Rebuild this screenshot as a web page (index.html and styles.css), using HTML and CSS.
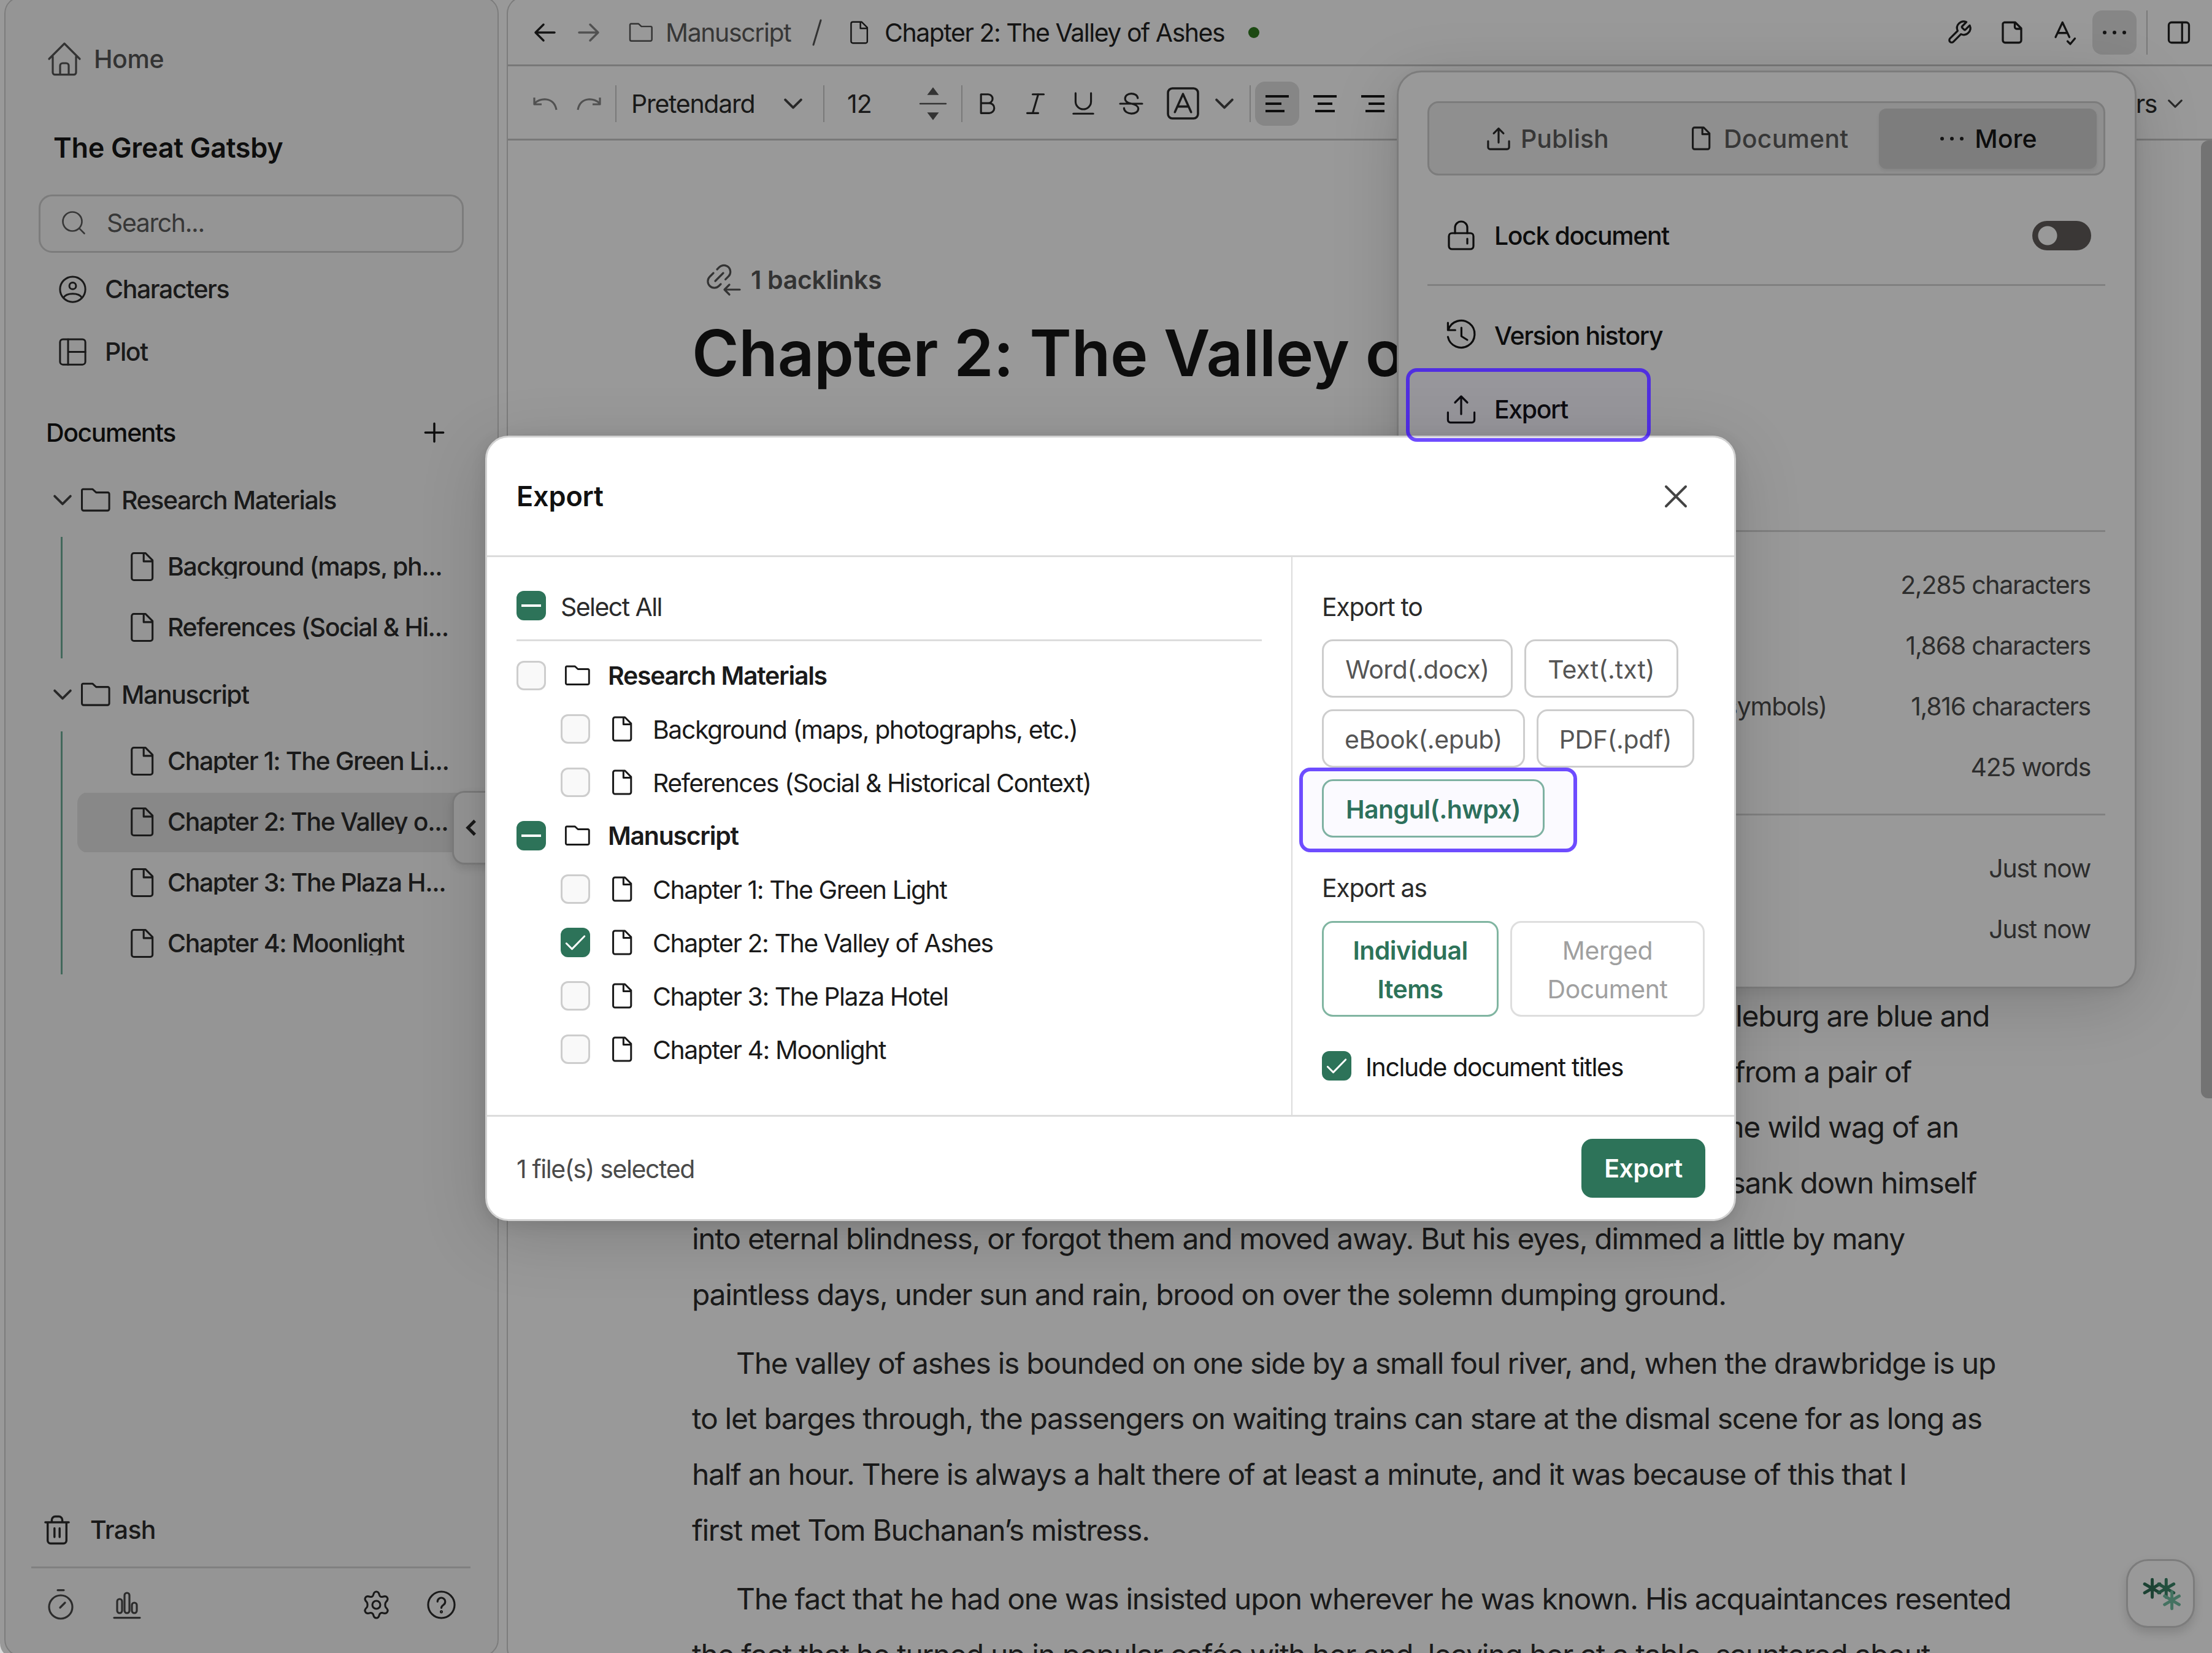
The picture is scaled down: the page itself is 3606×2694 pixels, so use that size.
FILE: index.html
```html
<!DOCTYPE html>
<html lang="en">

<head>
  <meta charset="UTF-8" />
  <meta name="viewport" content="width=device-width, initial-scale=1.0" />
  <title>Chapter 2: The Valley of Ashes</title>
  <link rel="stylesheet" href="styles.css">
</head>

<body>
  <!-- Icon sprite -->
  <svg class="sprite" width="0" height="0">
    <symbol id="i-file" viewBox="0 0 20 25"><path d="M3.2 1.2h9.6l6 6V22a1.8 1.8 0 0 1-1.8 1.8H3.2A1.8 1.8 0 0 1 1.4 22V3a1.8 1.8 0 0 1 1.8-1.8z M11.4 1.2v6.9h7.4" /></symbol>
    <symbol id="i-folder" viewBox="0 0 26 21"><path d="M1.2 2.2a1 1 0 0 1 1-1h8.2l3 2.8h10a1.2 1.2 0 0 1 1.2 1.2v12.8a1.5 1.5 0 0 1-1.5 1.5H2.7a1.5 1.5 0 0 1-1.5-1.5z" /></symbol>
    <symbol id="i-down" viewBox="0 0 28 28"><path d="M2 8l12 12L26 8" /></symbol>
    <symbol id="i-export" viewBox="0 0 24 24"><path d="M12 16V1.5M7 6.5l5-5 5 5M1.2 14.5v6.3a2 2 0 0 0 2 2h17.6a2 2 0 0 0 2-2v-6.3" /></symbol>
    <symbol id="i-check" viewBox="0 0 24 24"><path d="M4 12.8l5 5L20 6.5" /></symbol>
  </svg>

  <div class="app">
    <!-- Sidebar -->
    <aside class="sidebar">
      <a class="home">
        <svg viewBox="0 0 28 28"><path d="M1.5 14L14 1.5 26.5 14M4.5 12v13a1.8 1.8 0 0 0 1.8 1.8h15.4a1.8 1.8 0 0 0 1.8-1.8V12M10.5 26.5v-7a2 2 0 0 1 2-2h3a2 2 0 0 1 2 2v7" /></svg>
        <span>Home</span>
      </a>
      <h2 class="project">The Great Gatsby</h2>
      <div class="search">
        <svg viewBox="0 0 24 24"><circle cx="10.8" cy="10.8" r="9.3" /><path d="M17.5 17.5l5 5" /></svg>
        <span>Search...</span>
      </div>
      <a class="nav-item">
        <svg viewBox="0 0 24 24"><circle cx="12" cy="12" r="11" /><circle cx="12" cy="9" r="2.9" /><path d="M4 19.2c1.5-2.6 4.5-3.4 8-3.4s6.5.8 8 3.4" /></svg>
        <span>Characters</span>
      </a>
      <a class="nav-item">
        <svg viewBox="0 0 24 24"><rect x="1" y="1" width="22" height="22" rx="2.5" /><path d="M8 1v22M8 12h15" /></svg>
        <span>Plot</span>
      </a>
      <div class="section-title">
        <span>Documents</span>
        <svg viewBox="0 0 24 24"><path d="M12 1v22M1 12h22" /></svg>
      </div>

      <div class="folder">
        <svg class="caret"><use href="#i-down" /></svg>
        <svg class="folder-icon"><use href="#i-folder" /></svg>
        <span class="name">Research Materials</span>
      </div>
      <div class="children">
        <div class="doc"><svg><use href="#i-file" /></svg><span class="name">Background (maps, ph...</span></div>
        <div class="doc"><svg><use href="#i-file" /></svg><span class="name">References (Social &amp; Hi...</span></div>
      </div>
      <div class="folder">
        <svg class="caret"><use href="#i-down" /></svg>
        <svg class="folder-icon"><use href="#i-folder" /></svg>
        <span class="name">Manuscript</span>
      </div>
      <div class="children">
        <div class="doc"><svg><use href="#i-file" /></svg><span class="name">Chapter 1: The Green Li...</span></div>
        <div class="doc active"><svg><use href="#i-file" /></svg><span class="name">Chapter 2: The Valley o...</span></div>
        <div class="doc"><svg><use href="#i-file" /></svg><span class="name">Chapter 3: The Plaza H...</span></div>
        <div class="doc"><svg><use href="#i-file" /></svg><span class="name">Chapter 4: Moonlight</span></div>
      </div>

      <div class="sidebar-footer">
        <div class="trash">
          <svg viewBox="0 0 22 25"><path d="M1 6h20M6.5 6V4a3 3 0 0 1 3-3h3a3 3 0 0 1 3 3v2M3 6v15.5A2.5 2.5 0 0 0 5.5 24h11a2.5 2.5 0 0 0 2.5-2.5V6M8.8 11v7.5M13.2 11v7.5" /></svg>
          <span>Trash</span>
        </div>
        <div class="tools">
          <svg class="soft" viewBox="0 0 24 26"><circle cx="12" cy="15" r="9.5" /><path d="M9.5 1.3h5M11.5 15.5l4-4" /></svg>
          <svg class="soft stats-icon" viewBox="0 0 24 26"><rect x="4" y="8.5" width="4" height="11.5" rx="2" /><rect x="10" y="3.5" width="4" height="16.5" rx="2" /><rect x="16" y="11.5" width="4" height="8.5" rx="2" /><path d="M1.5 23.8h21" /></svg>
          <svg class="gear" viewBox="0 0 24 24"><path d="M12 1c1.5 0 2.2 1.2 2.5 2.7.3 1.3 1.6 2 2.9 1.5 1.5-.5 2.9-.5 3.7.8.8 1.3.1 2.5-1 3.5-1 1-1 3.9 0 4.9 1.1 1 1.8 2.3 1 3.6-.8 1.3-2.2 1.3-3.7.8-1.3-.5-2.6.3-2.9 1.6C14.2 21.8 13.5 23 12 23s-2.2-1.2-2.5-2.6c-.3-1.3-1.6-2.1-2.9-1.6-1.5.5-2.9.5-3.7-.8-.8-1.3-.1-2.6 1-3.6 1-1 1-3.9 0-4.9-1.1-1-1.8-2.2-1-3.5.8-1.3 2.2-1.3 3.7-.8 1.3.5 2.6-.2 2.9-1.5C9.8 2.2 10.5 1 12 1z" /><circle cx="12" cy="12" r="3.3" /></svg>
          <svg viewBox="0 0 24 24"><circle cx="12" cy="12" r="11" /><path d="M8.8 9.3a3.2 3.2 0 1 1 5 2.7c-1.1.8-1.8 1.3-1.8 2.5" /><circle cx="12" cy="17.8" r=".5" /></svg>
        </div>
      </div>

      <div class="collapse"><svg viewBox="0 0 18 30"><path d="M15 3L3 15l12 12" /></svg></div>
    </aside>

    <!-- Editor -->
    <main class="main">
      <header class="topbar">
        <svg class="arrow" viewBox="0 0 34 30"><path d="M33 15H2M15 2L2 15l13 13" /></svg>
        <svg class="arrow next" viewBox="0 0 34 30"><path d="M1 15h31M19 2l13 13-13 13" /></svg>
        <svg class="crumb-icon"><use href="#i-folder" /></svg>
        <span class="crumb">Manuscript</span>
        <svg class="slash" viewBox="0 0 16 42"><path d="M14 1L2 41" /></svg>
        <svg class="crumb-file"><use href="#i-file" /></svg>
        <span class="crumb-current">Chapter 2: The Valley of Ashes</span>
        <i class="dot"></i>
        <div class="actions">
          <svg viewBox="2 2 20 20"><path d="M14.7 6.3a1 1 0 0 0 0 1.4l1.6 1.6a1 1 0 0 0 1.4 0l3.77-3.77a6 6 0 0 1-7.94 7.94l-6.91 6.91a2.12 2.12 0 0 1-3-3l6.91-6.91a6 6 0 0 1 7.94-7.94z" /></svg>
          <svg viewBox="0 0 24 24"><path d="M3.5 1h12l6.500 6.500v13a2.500 2.500 0 0 1-2.500 2.500h-15A2.500 2.500 0 0 1 2 20.500V3a2 2 0 0 1 1.500-2zM15 1v5a2 2 0 0 0 2 2h5" /></svg>
          <svg viewBox="0 0 24 24"><path d="M2 17L9.5 1 17 17M4.5 12.5h10M15 21.5l3 3 5-6" /></svg>
          <span class="more"><i></i><i></i><i></i></span>
          <span class="sep"></span>
          <svg viewBox="0 0 24 24"><rect x="1" y="1" width="22" height="22" rx="3" /><path d="M15.5 1v22" /></svg>
        </div>
      </header>

      <div class="toolbar">
        <svg class="undo" viewBox="0 0 40 24"><path d="M2 2v11h12M2 12C10 2 34 0 38 22" /></svg>
        <svg class="undo redo" viewBox="0 0 40 24"><path d="M38 2v11H26M38 12C30 2 6 0 2 22" /></svg>
        <span class="sep"></span>
        <span class="font-name">Pretendard</span>
        <svg class="chev"><use href="#i-down" /></svg>
        <span class="sep sep-size"></span>
        <span class="font-size">12</span>
        <svg class="stepper" viewBox="0 0 44 56"><path class="solid" d="M22 0l10 13H12zM22 56l10-13H12z" /><path d="M0 28h44" /></svg>
        <span class="sep sep-style"></span>
        <svg class="fmt" viewBox="0 0 40 40"><path d="M8 3h13a8 8 0 0 1 0 16H8zM8 19h15a9 9 0 0 1 0 18H8z" /></svg>
        <svg class="fmt" viewBox="0 0 40 40"><path d="M15 3h20M5 37h20M25 3L15 37" /></svg>
        <svg class="fmt" viewBox="0 0 40 40"><path d="M6 1v15a14 14 0 0 0 28 0V1M2 38h36" /></svg>
        <svg class="fmt" viewBox="0 0 40 40"><path d="M32 10c-1-11-23-11-23 1 0 7 8 8 12 9s12 3 12 9c0 12-25 12-26-1M0 20h40" /></svg>
        <svg class="fmt boxed" viewBox="0 0 52 52"><rect x="2" y="2" width="48" height="48" rx="7" /><path d="M13 40L26 11l13 29M17.5 31h17" /></svg>
        <svg class="chev chev-color"><use href="#i-down" /></svg>
        <span class="sep sep-align"></span>
        <span class="align on"><svg viewBox="0 0 38 30"><path d="M0 3h38M0 15h26M0 27h31" /></svg></span>
        <span class="align"><svg viewBox="0 0 38 30"><path d="M0 3h38M7 15h24M3 27h32" /></svg></span>
        <span class="align"><svg viewBox="0 0 38 30"><path d="M0 3h38M12 15h26M7 27h31" /></svg></span>
        <span class="headers">Headers</span>
        <svg class="chev chev-end"><use href="#i-down" /></svg>
      </div>

      <article class="page">
        <div class="backlinks">
          <svg viewBox="0 0 28 26"><path d="M9.5 4.5l1.8-1.8a5.3 5.3 0 0 1 7.5 7.5l-2.5 2.5M6.5 7.5L3.5 10.5a5.3 5.3 0 0 0 7.5 7.5l1.5-1.5M8 14l6.5-6.5M28 21H15.5M19.5 17l-4 4 4 4" /></svg>
          <span>1 backlinks</span>
        </div>
        <h1>Chapter 2: The Valley of Ashes</h1>
        <div class="prose">
          <p>But above the gray land and the spasms of bleak dust which drift endlessly over it, you perceive,<br>
            after a moment, the eyes of Doctor T. J. Eckleburg. The eyes of Doctor T. J. Eckleburg are blue and<br>
            gigantic—their retinas are one yard high. They look out of no face, but, instead, from a pair of<br>
            enormous yellow spectacles which pass over a nonexistent nose. Evidently some wild wag of an<br>
            oculist set them there to fatten his practice in the borough of Queens, and then sank down himself<br>
            into eternal blindness, or forgot them and moved away. But his eyes, dimmed a little by many<br>
            paintless days, under sun and rain, brood on over the solemn dumping ground.</p>
          <p>The valley of ashes is bounded on one side by a small foul river, and, when the drawbridge is up<br>
            to let barges through, the passengers on waiting trains can stare at the dismal scene for as long as<br>
            half an hour. There is always a halt there of at least a minute, and it was because of this that I<br>
            first met Tom Buchanan’s mistress.</p>
          <p>The fact that he had one was insisted upon wherever he was known. His acquaintances resented<br>
            the fact that he turned up in popular cafés with her and, leaving her at a table, sauntered about,</p>
        </div>
      </article>
    </main>

    <div class="scrollbar"></div>

    <!-- More menu -->
    <div class="popover">
      <div class="tabs">
        <div class="tab tab-publish"><svg><use href="#i-export" /></svg><span>Publish</span></div>
        <div class="tab tab-document"><svg><use href="#i-file" /></svg><span>Document</span></div>
        <div class="tab tab-more"><b class="dots"><i></i><i></i><i></i></b><span>More</span></div>
      </div>
      <div class="menu-row lock">
        <svg viewBox="0 0 24 24"><rect x="2" y="10" width="20" height="13" rx="2.5" /><path d="M7 10V5.5a5 5 0 0 1 10 0V10M17 14.5v4" /></svg>
        <span>Lock document</span>
        <div class="toggle"></div>
      </div>
      <hr>
      <div class="menu">
        <div class="menu-row">
          <svg viewBox="0 0 24 24"><path d="M1.2 1.5v6h6M1.5 7.3A11 11 0 1 1 1.2 13M12.2 5.5v7l4.8 3" /></svg>
          <span>Version history</span>
        </div>
        <div class="menu-row">
          <svg><use href="#i-export" /></svg>
          <span>Export</span>
        </div>
      </div>
      <hr>
      <div class="stats">
        <div class="stat"><span>With spaces</span><span>2,285 characters</span></div>
        <div class="stat"><span>Without spaces</span><span>1,868 characters</span></div>
        <div class="stat"><span class="label-long">Without spaces (excluding symbols)</span><span>1,816 characters</span></div>
        <div class="stat"><span>Words</span><span>425 words</span></div>
      </div>
      <hr>
      <div class="stats">
        <div class="stat"><span>Created</span><span>Just now</span></div>
        <div class="stat"><span>Updated</span><span>Just now</span></div>
      </div>
    </div>

    <div class="assistant">
      <svg viewBox="0 0 60 60">
        <path class="a1" d="M17 8v28M5 15l24 14M29 15L5 29" />
        <path class="a2" d="M39 8v28M27 15l24 14M51 15L27 29" />
        <path class="a3" d="M48 27v27M36.5 34l23 13.5M59.5 34l-23 13.5" />
      </svg>
    </div>

    <div class="overlay"></div>
  </div>

  <!-- Export dialog -->
  <div class="modal">
    <div class="modal-header">
      <h3>Export</h3>
      <svg viewBox="0 0 36 36"><path d="M2 2l32 32M34 2L2 34" /></svg>
    </div>
    <div class="modal-body">
      <div class="files">
        <div class="select-all"><i class="box minus"></i><span>Select All</span></div>
        <div class="file-row group"><i class="box"></i><svg><use href="#i-folder" /></svg><span>Research Materials</span></div>
        <div class="file-row"><i class="box"></i><svg><use href="#i-file" /></svg><span>Background (maps, photographs, etc.)</span></div>
        <div class="file-row"><i class="box"></i><svg><use href="#i-file" /></svg><span>References (Social &amp; Historical Context)</span></div>
        <div class="file-row group"><i class="box minus"></i><svg><use href="#i-folder" /></svg><span>Manuscript</span></div>
        <div class="file-row"><i class="box"></i><svg><use href="#i-file" /></svg><span>Chapter 1: The Green Light</span></div>
        <div class="file-row"><i class="box checked"><svg><use href="#i-check" /></svg></i><svg><use href="#i-file" /></svg><span>Chapter 2: The Valley of Ashes</span></div>
        <div class="file-row"><i class="box"></i><svg><use href="#i-file" /></svg><span>Chapter 3: The Plaza Hotel</span></div>
        <div class="file-row"><i class="box"></i><svg><use href="#i-file" /></svg><span>Chapter 4: Moonlight</span></div>
      </div>
      <div class="options">
        <p class="label">Export to</p>
        <div class="formats">
          <button class="w-word">Word(.docx)</button>
          <button class="w-text">Text(.txt)</button>
          <button class="w-epub">eBook(.epub)</button>
          <button class="w-pdf">PDF(.pdf)</button>
          <button class="w-hwpx selected">Hangul(.hwpx)</button>
        </div>
        <p class="label label-as">Export as</p>
        <div class="modes">
          <button class="w-items selected">Individual<br>Items</button>
          <button class="w-merged disabled">Merged<br>Document</button>
        </div>
        <div class="titles"><i class="box checked"><svg><use href="#i-check" /></svg></i><span>Include document titles</span></div>
      </div>
    </div>
    <div class="modal-footer">
      <span>1 file(s) selected</span>
      <button class="submit">Export</button>
    </div>
  </div>

  <!-- Highlights -->
  <div class="mark mark-menu"></div>
  <div class="mark mark-format"></div>
</body>

</html>
```

FILE: styles.css
```css
* {
  margin: 0;
  padding: 0;
  box-sizing: border-box;
}

body {
  position: relative;
  width: 3606px;
  height: 2694px;
  overflow: hidden;
  background: #dcdcdc;
  font-family: 'Inter', sans-serif;
  font-size: 41px;
  letter-spacing: -0.034em;
  color: #1a1a1a;
}

svg {
  display: block;
  flex: none;
  fill: none;
  stroke: currentColor;
  stroke-width: 1.6;
  stroke-linecap: round;
  stroke-linejoin: round;
  overflow: visible;
}

span {
  white-space: nowrap;
}

.sprite {
  position: absolute;
}

.app {
  position: relative;
  display: flex;
  gap: 13px;
  width: 3606px;
  height: 2702px;
  padding-left: 7px;
  background: #fff;
  border-radius: 0 0 0 24px;
  overflow: hidden;
}

.overlay {
  position: absolute;
  inset: 0;
  background: rgba(0, 0, 0, 0.4);
}

/* Sidebar */
.sidebar {
  position: relative;
  display: flex;
  flex-direction: column;
  width: 806px;
  height: 2706px;
  margin-top: -6px;
  padding-top: 4px;
  background: #f9f9f9;
  border: 2px solid #cfcfcf;
  border-radius: 28px;
  font-weight: 500;
  color: #2c2c2c;
}

.home {
  display: flex;
  align-items: center;
  gap: 20px;
  height: 60px;
  margin: 66px 0 0 68px;
  letter-spacing: -0.01em;
  color: #555;
}

.home svg {
  width: 56px;
  height: 56px;
}

.project {
  margin: 85px 0 0 78px;
  font-size: 45px;
  line-height: 60px;
  font-weight: 600;
  letter-spacing: -0.007em;
  color: #181818;
}

.search {
  display: flex;
  align-items: center;
  gap: 34px;
  width: 693px;
  height: 95px;
  margin: 46px 0 0 54px;
  padding: 0 0 3px 34px;
  border: 3px solid #cfcfcf;
  border-radius: 22px;
  font-weight: 400;
  color: #5c5c5c;
}

.search svg {
  width: 40px;
  height: 40px;
}

.nav-item {
  display: flex;
  align-items: center;
  gap: 30px;
  height: 102px;
  padding-left: 87px;
}

.search + .nav-item {
  margin-top: 8px;
}

.nav-item svg {
  width: 45px;
  height: 45px;
}

.section-title {
  display: flex;
  align-items: center;
  justify-content: space-between;
  height: 60px;
  margin: 51px 87px 22px 66px;
  color: #141414;
}

.section-title svg {
  width: 32px;
  height: 32px;
  stroke-width: 2.6;
}

.folder {
  display: flex;
  align-items: center;
  height: 99px;
  margin-top: 10px;
  padding: 0 0 4px 78px;
}

.caret {
  width: 30px;
  height: 30px;
  margin-right: 14px;
  stroke-width: 3.5;
  color: #444;
}

.folder-icon {
  width: 50px;
  height: 40px;
  margin-right: 17px;
}

.children {
  margin: 9px 28px 0 90px;
  border-left: 3px solid #6fae98;
}

.children + .folder {
  margin-top: 11px;
}

.doc {
  display: flex;
  align-items: center;
  gap: 22px;
  height: 99px;
  margin-left: 24px;
  padding: 0 0 3px 86px;
}

.doc.active {
  background: linear-gradient(#e3e3e3, #e3e3e3) 0 1px / 100% 97px no-repeat;
  border-radius: 18px;
}

.doc svg {
  width: 39px;
  height: 49px;
}

.name {
  line-height: 40px;
  overflow: hidden;
}

.sidebar-footer {
  margin: auto 44px 52px 42px;
}

.trash {
  display: flex;
  align-items: center;
  gap: 33px;
  height: 60px;
  margin-bottom: 30px;
  padding-left: 21px;
  letter-spacing: -0.016em;
}

.trash svg {
  width: 42px;
  height: 49px;
  stroke-width: 1.8;
}

.tools {
  display: flex;
  align-items: center;
  height: 93px;
  padding: 28px 24px 0 24px;
  border-top: 3px solid #d6d6d6;
}

.tools svg {
  width: 47px;
  height: 47px;
}

.tools .soft {
  width: 48px;
  height: 52px;
  color: #4a4a4a;
}

.tools .stats-icon {
  margin: 0 auto 0 60px;
}

.tools .gear {
  margin-right: 59px;
}

.collapse {
  position: absolute;
  right: 0;
  top: 1293px;
  display: flex;
  align-items: center;
  width: 74px;
  height: 120px;
  padding-left: 20px;
  background: #f9f9f9;
  border: 3px solid #cfcfcf;
  border-right: 0;
  border-radius: 20px 0 0 20px;
  box-shadow: 0 6px 16px rgba(0, 0, 0, 0.12);
}

.collapse svg {
  width: 17px;
  height: 30px;
  stroke-width: 5.5;
  stroke-linecap: butt;
  stroke-linejoin: miter;
}

/* Editor header */
.main {
  flex: 1;
  height: 2720px;
  margin-top: -6px;
  padding-top: 4px;
  border: 2px solid #cfcfcf;
  border-right: 0;
  border-radius: 28px 0 0 28px;
  background: #fff;
  overflow: hidden;
}

.topbar {
  display: flex;
  align-items: center;
  height: 108px;
  padding: 2px 36px 1px 43px;
  border-bottom: 3px solid #c9c9c9;
  color: #222;
}

.arrow {
  width: 34px;
  height: 30px;
  stroke-width: 3.5;
}

.arrow.next {
  margin-left: 38px;
  color: #888;
}

.crumb-icon {
  width: 40px;
  height: 32px;
  margin-left: 48px;
  color: #555;
}

.crumb {
  width: 239px;
  margin-left: 20px;
  color: #5c5c5c;
}

.slash {
  width: 16px;
  height: 42px;
  stroke-width: 3;
  color: #555;
}

.crumb-file {
  width: 31px;
  height: 38px;
  margin-left: 45px;
}

.crumb-current {
  margin-left: 26px;
  width: 593px;
  letter-spacing: -0.036em;
}

.dot {
  width: 18px;
  height: 18px;
  border-radius: 50%;
  background: #2f7a1f;
}

.actions {
  display: flex;
  align-items: center;
  margin-left: auto;
}

.actions svg {
  width: 36px;
  height: 36px;
  margin-left: 50px;
  stroke-width: 2.2;
}

.actions svg:first-child {
  stroke-width: 1.8;
}

.more {
  display: flex;
  align-items: center;
  justify-content: center;
  gap: 10px;
  width: 72px;
  height: 72px;
  margin-left: 27px;
  border-radius: 16px;
  background: #e0e0e0;
}

.more i,
.dots i {
  width: 6px;
  height: 6px;
  border-radius: 50%;
  background: #222;
}

.sep {
  width: 2px;
  height: 60px;
  background: #cacaca;
}

.actions .sep {
  height: 72px;
  margin-left: 16px;
}

.actions .sep + svg {
  margin-left: 33px;
}

/* Toolbar */
.toolbar {
  display: flex;
  align-items: center;
  height: 121px;
  padding: 3px 0 0 41px;
  border-bottom: 3px solid #c9c9c9;
  color: #2a2a2a;
}

.undo {
  width: 40px;
  height: 24px;
  stroke-width: 3.2;
  stroke-linecap: butt;
  color: #888;
}

.redo {
  margin: 0 23px 0 31px;
}

.font-name {
  width: 249px;
  margin-left: 24px;
  letter-spacing: -0.031em;
}

.chev {
  width: 30px;
  height: 30px;
  stroke-width: 3.6;
  color: #444;
}

.sep-size {
  margin: 0 37px 0 34px;
}

.font-size {
  width: 119px;
  letter-spacing: -0.02em;
}

.stepper {
  width: 42px;
  height: 54px;
  stroke-width: 2.5;
  color: #555;
}

.stepper .solid {
  fill: #555;
  stroke: none;
}

.sep-style {
  margin: 0 21px 0 25px;
}

.fmt {
  width: 40px;
  height: 36px;
  margin-right: 38px;
  stroke-width: 3.5;
}

.boxed {
  width: 53px;
  height: 53px;
  margin: 0 26px 0 0;
}

.sep-align {
  margin: 0 7px 0 26px;
}

.align {
  display: flex;
  align-items: center;
  justify-content: center;
  width: 72px;
  height: 72px;
  margin-right: 6px;
  border-radius: 16px;
}

.align.on {
  background: #e0e0e0;
}

.align svg {
  width: 38px;
  height: 30px;
  stroke-width: 3.8;
  stroke-linecap: butt;
  color: #181818;
}

.headers {
  margin-left: auto;
}

.chev-end {
  width: 24px;
  height: 24px;
  margin: 0 48px 0 18px;
}

/* Page */
.page {
  padding: 197px 0 0 300px;
}

.backlinks {
  display: flex;
  align-items: center;
  gap: 18px;
  height: 60px;
  padding-left: 22px;
  font-weight: 600;
  letter-spacing: -0.008em;
  color: #555;
}

.backlinks svg {
  width: 56px;
  height: 52px;
}

h1 {
  margin-top: 24px;
  font-size: 104px;
  line-height: 130px;
  font-weight: 600;
  letter-spacing: -0.003em;
  white-space: nowrap;
  color: #161616;
}

.prose {
  margin-top: 880px;
  font-size: 48px;
  line-height: 90.8px;
  letter-spacing: -0.0273em;
  white-space: nowrap;
  color: #2c2c2c;
}

.prose p {
  margin-bottom: 21px;
  text-indent: 72px;
}

.scrollbar {
  position: absolute;
  right: 0;
  top: 229px;
  width: 18px;
  height: 1561px;
  border-radius: 12px 0 0 12px;
  background: #c0c0c0;
}

/* More menu */
.popover {
  position: absolute;
  left: 2277px;
  top: 115px;
  width: 1206px;
  height: 1496px;
  padding: 47px 48px 0 47px;
  background: #fff;
  border: 3px solid #cfcfcf;
  border-radius: 40px;
  box-shadow: 0 24px 110px rgba(0, 0, 0, 0.16), 0 6px 20px rgba(0, 0, 0, 0.06);
}

.tabs {
  display: flex;
  align-items: center;
  height: 121px;
  padding: 9px;
  background: #efefef;
  border: 3px solid #cfcfcf;
  border-radius: 18px;
  font-weight: 500;
  letter-spacing: 0;
  color: #5c5c5c;
}

.tab {
  display: flex;
  align-items: center;
  height: 98px;
}

.tab-publish {
  width: 418px;
  gap: 17px;
  padding-left: 85px;
}

.tab-document {
  width: 306px;
  gap: 21px;
  letter-spacing: 0.005em;
}

.tab-more {
  flex: 1;
  justify-content: center;
  gap: 18px;
  margin-right: 2px;
  padding-left: 3px;
  border-radius: 12px;
  background: #d0d0d0;
  box-shadow: 0 3px 6px rgba(0, 0, 0, 0.08);
  color: #161616;
}

.tab-publish svg {
  width: 38px;
  height: 38px;
  stroke-width: 2;
  color: #2a2a2a;
}

.tab-document svg {
  width: 32px;
  height: 39px;
  stroke-width: 2;
  color: #2a2a2a;
}

.dots {
  display: flex;
  gap: 10px;
}

.menu-row {
  display: flex;
  align-items: center;
  gap: 30px;
  height: 120px;
  padding-left: 31px;
  font-weight: 500;
  color: #161616;
}

.menu-row svg {
  width: 48px;
  height: 48px;
}

.lock {
  height: 100px;
  margin: 48px 23px 29px 0;
}

.toggle {
  width: 96px;
  height: 48px;
  margin-left: auto;
  border-radius: 24px;
  background: radial-gradient(circle at 25px 24px, #fff 15px, #615d5a 16px);
}

hr {
  height: 3px;
  border: 0;
  background: #d6d6d6;
}

.menu {
  height: 398px;
  padding-top: 21px;
}

.stats {
  padding: 36px 24px 27px;
}

.stat {
  display: flex;
  align-items: center;
  justify-content: space-between;
  height: 99px;
  letter-spacing: -0.031em;
  color: #4c4c4c;
}

.label-long {
  display: flex;
  justify-content: flex-end;
  width: 627px;
}

.assistant {
  position: absolute;
  left: 3466px;
  top: 2541px;
  display: flex;
  align-items: center;
  justify-content: center;
  width: 112px;
  height: 112px;
  background: #fff;
  border: 3px solid #cfcfcf;
  border-radius: 36px;
  box-shadow: 0 8px 16px rgba(0, 0, 0, 0.14);
}

.assistant svg {
  width: 62px;
  height: 62px;
  stroke-width: 4.8;
}

.a1 {
  stroke: #2f6f55;
}

.a2 {
  stroke: #3a8468;
}

.a3 {
  stroke: #72bfa2;
}

/* Export dialog */
.modal {
  position: absolute;
  left: 791px;
  top: 710px;
  display: flex;
  flex-direction: column;
  width: 2039px;
  height: 1280px;
  background: #fff;
  border: 3px solid #d2d2d2;
  border-radius: 38px;
  box-shadow: 0 24px 110px rgba(0, 0, 0, 0.16), 0 6px 24px rgba(0, 0, 0, 0.1);
}

.modal-header {
  display: flex;
  align-items: center;
  justify-content: space-between;
  height: 195px;
  padding: 0 77px 1px 48px;
  border-bottom: 3px solid #dcdcdc;
}

h3 {
  font-size: 45px;
  font-weight: 600;
  letter-spacing: -0.004em;
  color: #111;
}

.modal-header svg {
  width: 36px;
  height: 36px;
  stroke-width: 4;
  color: #444;
}

.modal-body {
  flex: 1;
  display: flex;
}

.files {
  width: 1313px;
  padding: 34px 48px 0 48px;
  border-right: 2px solid #dcdcdc;
}

.select-all {
  display: flex;
  align-items: center;
  gap: 24px;
  height: 103px;
  margin-bottom: 12px;
  padding-bottom: 10px;
  border-bottom: 3px solid #dcdcdc;
  letter-spacing: -0.038em;
  color: #2a2a2a;
}

.select-all span,
.file-row span {
  padding-top: 3px;
}

.box {
  display: flex;
  align-items: center;
  justify-content: center;
  flex: none;
  width: 48px;
  height: 48px;
  border: 3px solid #cdcdcd;
  border-radius: 12px;
  background: #f9f9f9;
}

.box.minus {
  border-color: #2d7359;
  background: linear-gradient(#fff, #fff) center / 32px 4px no-repeat #2d7359;
}

.box.checked {
  border-color: #2d7359;
  background: #2d7359;
  color: #fff;
}

.box svg {
  width: 44px;
  height: 44px;
}

.file-row {
  display: flex;
  align-items: center;
  height: 87px;
  padding-left: 72px;
  letter-spacing: -0.0355em;
}

.file-row > svg {
  width: 34px;
  height: 42px;
  margin: 0 33px 0 35px;
  stroke-width: 1.8;
}

.file-row.group {
  padding-left: 0;
  font-weight: 600;
  letter-spacing: -0.031em;
}

.file-row.group span {
  padding-top: 1px;
}

.file-row.group > svg {
  width: 43px;
  height: 34px;
  margin: 0 28px 0 30px;
}

.options {
  flex: 1;
  padding: 51px 0 0 48px;
}

.label {
  height: 60px;
  line-height: 60px;
  margin-bottom: 23px;
  letter-spacing: -0.032em;
  color: #2a2a2a;
}

.label-as {
  margin: 52px 0 24px;
}

.formats,
.modes {
  display: flex;
  flex-wrap: wrap;
  gap: 19px;
}

button {
  height: 95px;
  padding-top: 3px;
  background: none;
  border: 3px solid #cdcdcd;
  border-radius: 18px;
  font: inherit;
  letter-spacing: -0.01em;
  color: #555;
}

.selected {
  border-color: #80b5a1;
  font-weight: 600;
  letter-spacing: -0.013em;
  color: #2d7359;
}

.disabled {
  border-color: #dedede;
  color: #a0a0a0;
}

.w-word { width: 311px; }
.w-text { width: 251px; letter-spacing: 0; }
.w-epub { width: 331px; }
.w-pdf { width: 257px; }
.w-hwpx { width: 363px; }
.w-items { width: 288px; }
.w-merged { width: 317px; }

.modes button {
  height: 156px;
  line-height: 63px;
}

.titles {
  display: flex;
  align-items: center;
  gap: 23px;
  height: 60px;
  margin-top: 50px;
  letter-spacing: -0.034em;
  color: #161616;
}

.titles span {
  padding-top: 3px;
}

.modal-footer {
  display: flex;
  align-items: center;
  justify-content: space-between;
  height: 170px;
  padding: 0 47px 0 48px;
  border-top: 3px solid #dcdcdc;
  color: #4a4a4a;
}

.modal-footer span {
  padding-top: 2px;
}

.submit {
  width: 202px;
  height: 96px;
  padding: 0;
  border: 0;
  background: #2d7359;
  font-weight: 600;
  color: #fff;
}

/* Highlights */
.mark {
  position: absolute;
  border: 6px solid rgba(49, 0, 255, 0.7);
  border-radius: 18px;
  background: rgba(49, 0, 255, 0.02);
  background-clip: padding-box;
}

.mark-menu {
  left: 2292px;
  top: 600px;
  width: 399px;
  height: 120px;
}

.mark-format {
  left: 2118px;
  top: 1251px;
  width: 453px;
  height: 138px;
}
```
